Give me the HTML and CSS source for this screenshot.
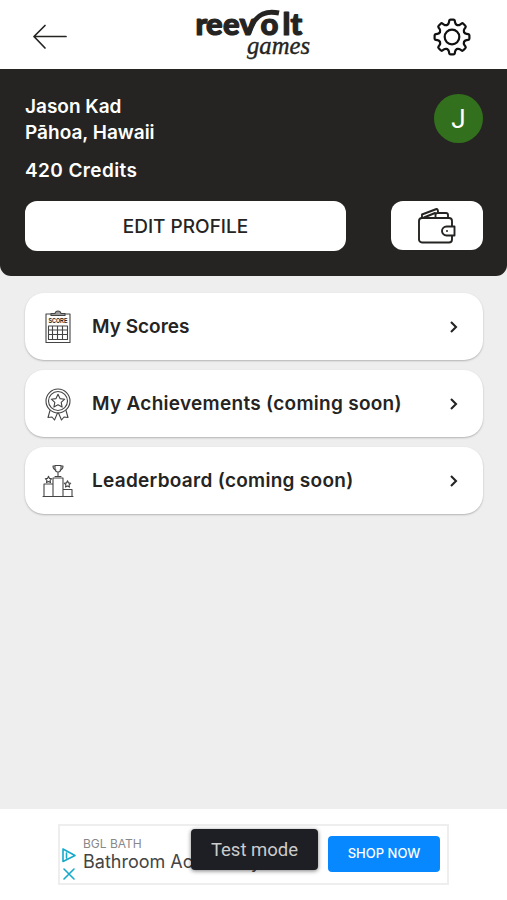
FILE: index.html
```
<!DOCTYPE html>
<html lang="en">
<head>
  <meta charset="UTF-8" />
  <meta name="viewport" content="width=device-width, initial-scale=1.0" />
  <title>Profile - Reevolt Games</title>
  <link rel="stylesheet" href="styles.css">
</head>
<body>
  <header class="topbar">
    <svg class="back" width="36" height="26" viewBox="0 0 36 26">
      <path d="M34 12.500H2M13 1.500 2 12.500 13 24" />
    </svg>
    <svg class="logo" width="120" height="62" viewBox="0 0 120 62">
      <text class="logo-main" x="0.500 11 28 44.500 65.500 87.500 95.500" y="30">reevolt</text>
      <path d="M53.500 29C58 14 66 4 84 8" />
      <text class="logo-sub" x="52" y="49" textLength="63" lengthAdjust="spacingAndGlyphs">games</text>
    </svg>
    <svg class="gear" width="40" height="40" viewBox="-20 -20 40 40">
      <defs>
        <path id="tooth" d="M-5-12Q-3.4-12.7-3.1-14.5L-2.8-16.2Q-2.6-17.4-1.4-17.4H1.4Q2.6-17.4 2.8-16.2L3.1-14.5Q3.4-12.7 5-12" />
      </defs>
      <circle r="7.3" />
      <use href="#tooth" />
      <use href="#tooth" transform="rotate(45)" />
      <use href="#tooth" transform="rotate(90)" />
      <use href="#tooth" transform="rotate(135)" />
      <use href="#tooth" transform="rotate(180)" />
      <use href="#tooth" transform="rotate(225)" />
      <use href="#tooth" transform="rotate(270)" />
      <use href="#tooth" transform="rotate(315)" />
    </svg>
  </header>

  <section class="profile">
    <div class="profile-info">
      <div class="details">
        <div class="name">Jason Kad</div>
        <div class="place">Pāhoa, Hawaii</div>
        <div class="credits">420 Credits</div>
      </div>
      <div class="avatar">J</div>
    </div>
    <div class="actions">
      <button class="edit">EDIT PROFILE</button>
      <button class="wallet">
        <svg width="40" height="40" viewBox="0 0 40 40">
          <rect x="2" y="12" width="33" height="24.500" rx="3" />
          <path d="M5 11.500V8.500L19.500 3q1.500 0 1.500 3M7 11.500 18 7M18.500 11.500V9q0-2 2-2H29q2 0 2 2v2.500" />
          <path class="clasp" d="M37.500 20.500H29.500a4.500 4.500 0 0 0 0 9H37.500z" />
          <circle class="dot" cx="30" cy="25" r="1" />
        </svg>
      </button>
    </div>
  </section>

  <main class="menu">
    <a class="item">
      <svg class="icon" width="34" height="36" viewBox="0 0 34 36">
        <rect x="5" y="5" width="24" height="28.500" />
        <path class="clip" d="M10 6.500V4.500h4q.5-2.500 3-2.500t3 2.500h4v2z" />
        <text x="7.500" y="14" textLength="19" lengthAdjust="spacingAndGlyphs">SCORE</text>
        <path d="M7.500 17h19v13.500h-19zM7.500 21h19M7.500 25.500h19M11.500 17v13.500M16.500 17v13.500M21.500 17v13.500" />
      </svg>
      <span class="label">My Scores</span>
      <svg class="chevron" width="10" height="14" viewBox="0 0 10 14"><path d="M2 2l5 5-5 5" /></svg>
    </a>
    <a class="item">
      <svg class="icon" width="34" height="36" viewBox="0 0 34 36">
        <circle cx="17" cy="15" r="12" />
        <circle cx="17" cy="15" r="9.500" />
        <path d="M17 8.300l2 4.300 4.700.6-3.500 3.200.9 4.700L17 18.800l-4.100 2.300.9-4.700-3.500-3.200 4.700-.6z" />
        <path d="M9 24.500l-2 7 4-.5 2.500 3 3-7M25 24.500l2 7-4-.5-2.500 3-3-7" />
      </svg>
      <span class="label wide">My Achievements (coming soon)</span>
      <svg class="chevron" width="10" height="14" viewBox="0 0 10 14"><path d="M2 2l5 5-5 5" /></svg>
    </a>
    <a class="item">
      <svg class="icon" width="34" height="36" viewBox="0 0 34 36">
        <path d="M2 33.500h30M3 33V21h9M12 33V15h10V33M22 26.500h9v6.500M14 13.500h6" />
        <path d="M14 2.500h6v3q0 3.500-3 3.500t-3-3.500zM17 9v4M14 3H12q0 3.500 3 4M20 3H22q0 3.500-3 4" />
        <path d="M7.500 13.200l1 2.200 2.200.3-1.600 1.600.4 2.300-2-1.100-2 1.100.4-2.300-1.600-1.600 2.200-.3zM26.500 17.700l1 2.200 2.200.3-1.600 1.600.4 2.300-2-1.100-2 1.100.4-2.300-1.600-1.600 2.200-.3z" />
      </svg>
      <span class="label wide">Leaderboard (coming soon)</span>
      <svg class="chevron" width="10" height="14" viewBox="0 0 10 14"><path d="M2 2l5 5-5 5" /></svg>
    </a>
  </main>

  <footer class="ad-area">
    <div class="ad">
      <div class="ad-icons">
        <svg width="16" height="34" viewBox="0 0 16 34">
          <path d="M2 2v12.500L14 8.500zM5.500 6v5M3 22l10 10M13 22 3 32" />
        </svg>
      </div>
      <div class="ad-text">
        <div class="ad-brand">BGL BATH</div>
        <div class="ad-title">Bathroom Accessory</div>
      </div>
      <button class="shop">SHOP NOW</button>
      <div class="toast">Test mode</div>
    </div>
  </footer>
</body>
</html>
```
FILE: styles.css
```
* {
  box-sizing: border-box;
}
body {
  margin: 0;
  height: 900px;
  display: flex;
  flex-direction: column;
  background: #eee;
  color: #252422;
  font-family: Inter, "Open Sans", sans-serif;
  overflow: hidden;
}
svg {
  display: block;
  flex: none;
  fill: none;
  stroke: #252422;
  stroke-linecap: round;
  stroke-linejoin: round;
}
button {
  border: none;
  padding: 0;
  background: #fff;
  color: #252422;
  font-family: inherit;
}
.topbar {
  height: 69px;
  padding: 5px 35px 0 32px;
  display: flex;
  align-items: center;
  justify-content: space-between;
  background: #fff;
}
.back {
  stroke-width: 1.7;
}
.logo {
  margin-left: 127px;
  margin-right: auto;
  align-self: flex-start;
}
.logo text {
  fill: #252422;
}
.logo path {
  stroke-width: 5;
  stroke-linecap: butt;
}
.logo .logo-main {
  font: 900 31px Lato, sans-serif;
  stroke-width: 1.2;
}
.logo .logo-sub {
  font: italic 400 26px "Liberation Serif", serif;
  stroke-width: 0.4;
}
.gear {
  stroke: #111;
  stroke-width: 2.2;
}

.profile {
  height: 207px;
  padding: 25px 24px 0 25px;
  border-radius: 0 0 11px 11px;
  background: #252422;
  color: #fff;
}
.profile-info {
  display: flex;
  justify-content: space-between;
  height: 107px;
}
.details {
  font-size: 19px;
  font-weight: 600;
  line-height: 26px;
  white-space: nowrap;
}
.credits {
  margin-top: 12px;
  letter-spacing: 0.4px;
}
.avatar {
  width: 49px;
  height: 49px;
  border-radius: 50%;
  background: #33701d;
  font: 400 26px/50px Roboto, sans-serif;
  text-align: center;
}
.actions {
  display: flex;
  justify-content: space-between;
}
.edit {
  width: 321px;
  height: 50px;
  border-radius: 12px;
  font-size: 19px;
  font-weight: 500;
}
.wallet {
  width: 92px;
  height: 49px;
  border-radius: 12px;
  display: flex;
  align-items: center;
  justify-content: center;
}
.wallet svg {
  stroke-width: 1.9;
}
.wallet .clasp {
  fill: #fff;
}
.wallet .dot {
  fill: #252422;
  stroke: none;
}

.menu {
  flex: 1;
  padding: 17px 24px 0 25px;
  display: flex;
  flex-direction: column;
  gap: 10px;
}
.item {
  height: 67px;
  padding: 0 24px 0 16px;
  display: flex;
  align-items: center;
  background: #fff;
  border-radius: 19px;
  box-shadow: 0 1px 2px rgba(0, 0, 0, 0.25);
}
.icon {
  margin-right: 17px;
  stroke: #444;
  stroke-width: 1.1;
}
.icon .clip {
  fill: #999;
}
.icon text {
  fill: #252422;
  stroke: none;
  font: 700 7px "Liberation Sans", sans-serif;
}
.label {
  flex: 1;
  font-size: 19px;
  font-weight: 600;
  white-space: nowrap;
}
.label.wide {
  letter-spacing: 0.28px;
}
.chevron {
  stroke-width: 2.1;
  stroke-linecap: butt;
  stroke-linejoin: miter;
}

.ad-area {
  height: 91px;
  padding: 15px 58px 0;
  background: #fff;
}
.ad {
  position: relative;
  width: 391px;
  height: 61px;
  padding-right: 7px;
  display: flex;
  align-items: center;
  border: 2px solid #eee;
}
.ad-icons {
  width: 23px;
  padding: 19px 0 0 1px;
}
.ad-icons svg {
  stroke: #16aacb;
  stroke-width: 1.6;
}
.ad-text {
  flex: 1;
  white-space: nowrap;
}
.ad-brand {
  font-size: 12px;
  line-height: 15px;
  color: #888;
}
.ad-title {
  font-size: 18px;
  line-height: 22px;
  color: #444;
}
.shop {
  width: 112px;
  height: 36px;
  margin-bottom: 2px;
  padding-bottom: 2px;
  border-radius: 4px;
  background: #0788ff;
  color: #fff;
  font-size: 13px;
  font-weight: 500;
}
/* sits over the ad banner */
.toast {
  position: absolute;
  left: 131px;
  top: 3px;
  width: 127px;
  height: 41px;
  border-radius: 4px;
  background: #1d1f24;
  box-shadow: 0 1px 4px rgba(0, 0, 0, 0.5);
  color: #ccc;
  font: 18.5px/42px Roboto, sans-serif;
  text-align: center;
}
```
